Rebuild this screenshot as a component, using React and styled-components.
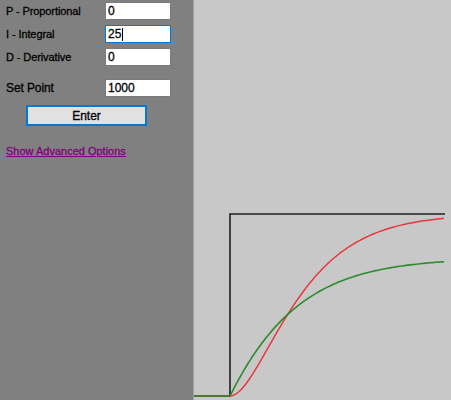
import React from 'react'
import styled, { createGlobalStyle } from 'styled-components'

const GlobalStyle = createGlobalStyle`
  html, body {
    margin: 0;
    padding: 0;
    background: #808080;
  }
`

// the whole window, controls on the left and the plot on the right
const Window = styled.div`
  display: flex;
  width: 451px;
  height: 400px;
  overflow: hidden;
  font-family: "Liberation Sans", Arial, sans-serif;
`

// text in the reference is rendered a little heavier than plain Arial
const ControlPanel = styled.div`
  width: 193px;
  flex: none;
  background: #808080;
  display: flex;
  flex-direction: column;
  padding: 2px 0 0 6px;
  box-sizing: border-box;
  -webkit-text-stroke: 0.3px currentColor;
`

const PlotPanel = styled.div`
  flex: 1;
  background: #c8c8c8;
  border-left: 1px solid #a4a4a4;
`

// a label with its text box
const Row = styled.div`
  display: flex;
  align-items: center;
  height: 18px;
  margin-top: ${props => props.gap || 0}px;
`

const Label = styled.span`
  width: 99px;
  font-size: ${props => (props.big ? 12 : 11)}px;
  color: #000;
  letter-spacing: -0.1px;
`

const TextBox = styled.div`
  width: 66px;
  height: 18px;
  box-sizing: border-box;
  background: #fff;
  border: 1px solid ${props => (props.focused ? '#0078d7' : '#7a7a7a')};
  font-size: 12px;
  line-height: 16px;
  padding-left: 2px;
  color: #000;
  display: flex;
  align-items: center;
`

const Caret = styled.span`
  width: 1px;
  height: 13px;
  background: #000;
  margin-left: 1px;
`

const EnterButton = styled.div`
  width: 121px;
  height: 21px;
  box-sizing: border-box;
  margin: 8px 0 0 20px;
  background: #e1e1e1;
  border: 2px solid #0078d7;
  font-size: 12px;
  display: flex;
  align-items: center;
  justify-content: center;
  color: #000;
`

const AdvancedLink = styled.a`
  margin-top: 19px;
  font-size: 11px;
  color: #800080;
  text-decoration: underline;
  cursor: pointer;
`

const PlotSvg = styled.svg`
  display: block;
`

const fields = [
  { label: 'P - Proportional', value: '0' },
  { label: 'I - Integral', value: '25', focused: true, gap: 5 },
  { label: 'D - Derivative', value: '0', gap: 5 }
]

// step response curves, in panel pixel coordinates
const X0 = 36
const BASE = 396
const STEP = 182

function curve(fn) {
  let d = `M0 ${BASE} L${X0} ${BASE}`
  for (let t = 0; t <= 215; t += 2) {
    d += ` L${X0 + t} ${(BASE - fn(t)).toFixed(2)}`
  }
  return d
}

const redPath = curve(t => {
  const u = t / 38
  return STEP * (1 - (1 + u) * Math.exp(-u))
})

const greenPath = curve(t => {
  const u = t / 48
  return 138 * (1 - (1 + 0.3 * u) * Math.exp(-u))
})

const setPointPath = `M0 ${BASE} L${X0} ${BASE} L${X0} 214 L251 214`

export default function App() {
  return (
    <>
      <GlobalStyle />
      <Window>
        <ControlPanel>
          {fields.map(f => (
            <Row key={f.label} gap={f.gap}>
              <Label>{f.label}</Label>
              <TextBox focused={f.focused}>
                {f.value}
                {f.focused && <Caret />}
              </TextBox>
            </Row>
          ))}
          <Row gap={13}>
            <Label big>Set Point</Label>
            <TextBox>1000</TextBox>
          </Row>
          <EnterButton>Enter</EnterButton>
          <AdvancedLink>Show Advanced Options</AdvancedLink>
        </ControlPanel>
        <PlotPanel>
          <PlotSvg width="257" height="400" viewBox="0 0 257 400">
            <path d={setPointPath} fill="none" stroke="#1e1e1e" strokeWidth="1.6" />
            <path d={redPath} fill="none" stroke="#e8393c" strokeWidth="1.5" />
            <path d={greenPath} fill="none" stroke="#2f8a2f" strokeWidth="1.6" />
          </PlotSvg>
        </PlotPanel>
      </Window>
    </>
  )
}
